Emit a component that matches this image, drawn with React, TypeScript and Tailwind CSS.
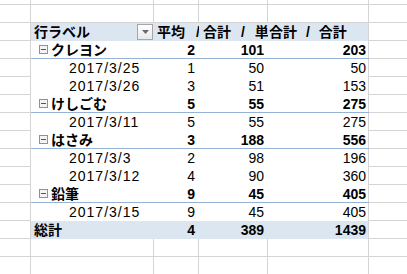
import React from "react"

const FONT = { fontFamily: '"Liberation Sans", "Noto Sans CJK JP", sans-serif' }

type Row =
  | { kind: "group"; label: string; vals: string[] }
  | { kind: "child"; label: string; vals: string[] }
  | { kind: "total"; label: string; vals: string[] }

const rows: Row[] = [
  { kind: "group", label: "クレヨン", vals: ["2", "101", "203"] },
  { kind: "child", label: "2017/3/25", vals: ["1", "50", "50"] },
  { kind: "child", label: "2017/3/26", vals: ["3", "51", "153"] },
  { kind: "group", label: "けしごむ", vals: ["5", "55", "275"] },
  { kind: "child", label: "2017/3/11", vals: ["5", "55", "275"] },
  { kind: "group", label: "はさみ", vals: ["3", "188", "556"] },
  { kind: "child", label: "2017/3/3", vals: ["2", "98", "196"] },
  { kind: "child", label: "2017/3/12", vals: ["4", "90", "360"] },
  { kind: "group", label: "鉛筆", vals: ["9", "45", "405"] },
  { kind: "child", label: "2017/3/15", vals: ["9", "45", "405"] },
  { kind: "total", label: "総計", vals: ["4", "389", "1439"] },
]

const widths = ["w-[31px]", "w-[123px]", "w-[45px]", "w-[69px]", "w-[101px]"]

// plain spreadsheet row with gridlines
const EmptyRow = ({ h = "h-[18px]" }: { h?: string }) => (
  <div className={`flex ${h}`}>
    {widths.map((w, i) => (
      <div key={i} className={`${w} shrink-0 border-r border-b border-[#d4d4d4]`} />
    ))}
    <div className="flex-1 border-b border-[#d4d4d4]" />
  </div>
)

const MinusBox = () => (
  <span className="inline-flex items-center justify-center w-[9px] h-[9px] border border-[#919191] bg-[#f4f4f4] mr-[3px] shrink-0">
    <span className="block w-[5px] h-px bg-[#555]" />
  </span>
)

const Dropdown = () => (
  <span className="absolute right-[1px] top-[1px] w-[16px] h-[16px] border border-[#a6a6a6] bg-gradient-to-b from-white to-[#e9e9e9] flex items-center justify-center">
    <svg width="7" height="4" viewBox="0 0 7 4">
      <path d="M0 0h7L3.5 4z" fill="#6b6b6b" />
    </svg>
  </span>
)

export default function App() {
  return (
    <div className="w-[407px] h-[274px] overflow-hidden bg-white text-black text-[14px] leading-none" style={FONT}>
      <EmptyRow h="h-[5px]" />
      <EmptyRow />

      {/* header */}
      <div className="flex h-[18px] font-bold">
        <div className="w-[31px] shrink-0 border-r border-b border-[#d4d4d4]" />
        <div className="w-[123px] shrink-0 bg-[#dce6f1] relative flex items-center pl-[3px]">
          行ラベル
          <Dropdown />
        </div>
        <div className="w-[45px] shrink-0 bg-[#dce6f1] flex items-center pl-[3px] overflow-hidden whitespace-nowrap [word-spacing:7px]">
          <span>平均 /</span>
        </div>
        <div className="w-[69px] shrink-0 bg-[#dce6f1] flex items-center pl-[4px] overflow-hidden whitespace-nowrap [word-spacing:6px]">
          <span>合計 / 単</span>
        </div>
        <div className="w-[101px] shrink-0 bg-[#dce6f1] border-r border-[#d4d4d4] flex items-center pl-[1px] overflow-hidden whitespace-nowrap [word-spacing:5px]">
          <span>合計 / 合計</span>
        </div>
        <div className="flex-1 border-b border-[#d4d4d4]" />
      </div>

      {rows.map((r, i) => {
        const bold = r.kind !== "child"
        const fill = r.kind === "total" ? "bg-[#dce6f1]" : "bg-white"
        const line = r.kind === "group" ? "border-b border-[#95b3d7]" : ""
        return (
          <div key={i} className="flex h-[18px]">
            <div className="w-[31px] shrink-0 border-r border-b border-[#d4d4d4]" />
            <div className={`flex shrink-0 w-[338px] ${fill} ${line} ${bold ? "font-bold" : ""}`}>
              <div
                className={`w-[123px] shrink-0 flex items-center whitespace-nowrap ${
                  r.kind === "group" ? "pl-[8px]" : r.kind === "child" ? "pl-[38px] tracking-[1px]" : "pl-[3px]"
                }`}
              >
                {r.kind === "group" && <MinusBox />}
                {r.label}
              </div>
              <div className="w-[45px] shrink-0 flex items-center justify-end pr-[4px]">{r.vals[0]}</div>
              <div className="w-[69px] shrink-0 flex items-center justify-end pr-[4px]">{r.vals[1]}</div>
              <div className="w-[101px] shrink-0 flex items-center justify-end pr-[2px] border-r border-[#d4d4d4]">{r.vals[2]}</div>
            </div>
            <div className="flex-1 border-b border-[#d4d4d4]" />
          </div>
        )
      })}

      <EmptyRow />
      <EmptyRow />
    </div>
  )
}
